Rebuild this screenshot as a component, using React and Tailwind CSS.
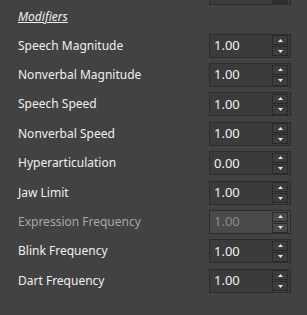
import React from 'react';

const rows = [
    { label: 'Speech Magnitude', value: '1.00' },
    { label: 'Nonverbal Magnitude', value: '1.00' },
    { label: 'Speech Speed', value: '1.00' },
    { label: 'Nonverbal Speed', value: '1.00' },
    { label: 'Hyperarticulation', value: '0.00' },
    { label: 'Jaw Limit', value: '1.00' },
    { label: 'Expression Frequency', value: '1.00', disabled: true },
    { label: 'Blink Frequency', value: '1.00' },
    { label: 'Dart Frequency', value: '1.00' },
];

const Arrow = ({ up }) => (
    <svg width="5" height="3" viewBox="0 0 5 3" className="block">
        {up ? <path d="M2.5 0 L5 3 L0 3 Z" fill="#e8e8e8" /> : <path d="M0 0 L5 0 L2.5 3 Z" fill="#e8e8e8" />}
    </svg>
);

const Spinner = ({ value, disabled }) => (
    <div
        className={`flex items-center w-[82px] h-[24px] border border-[#2c2c2c] ${disabled ? 'bg-[#4a4a4a]' : 'bg-[#3b3b3b]'}`}
    >
        <span className={`flex-1 pl-[4px] text-[13px] ${disabled ? 'text-[#8a8a8a]' : 'text-[#f2f2f2]'}`}>{value}</span>
        <div className="flex flex-col gap-[1px] mr-[2px]">
            <div className={`w-[16px] h-[10px] flex items-center justify-center border border-[#2a2a2a] ${disabled ? 'bg-[#4a4a4a]' : 'bg-[#3d3d3d]'}`}>
                <Arrow up />
            </div>
            <div className={`w-[16px] h-[10px] flex items-center justify-center border border-[#2a2a2a] ${disabled ? 'bg-[#4a4a4a]' : 'bg-[#3d3d3d]'}`}>
                <Arrow />
            </div>
        </div>
    </div>
);

export default function App() {
    return (
        <div className="w-[307px] h-[315px] bg-[#424242] overflow-hidden" style={{ fontFamily: '"Noto Sans", "Open Sans", sans-serif' }}>
            {/* tail of previous field */}
            <div className="pl-[209px] h-[5px]">
                <div className="w-[82px] h-[5px] bg-[#3b3b3b] border-b border-x border-[#2c2c2c] flex justify-end">
                    <div className="w-[16px] h-[4px] mr-[2px] bg-[#2e2e2e]" />
                </div>
            </div>

            <div className="pl-[18px] pt-[3px] h-[26px] text-[12px] italic underline text-[#f0f0f0]">Modifiers</div>

            <div className="flex flex-col">
                {rows.map((r) => (
                    <div key={r.label} className="flex items-center h-[29.4px] pl-[18px]">
                        <span className={`w-[191px] text-[12px] ${r.disabled ? 'text-[#a8a8a8]' : 'text-[#f0f0f0]'}`}>{r.label}</span>
                        <Spinner value={r.value} disabled={r.disabled} />
                    </div>
                ))}
            </div>
        </div>
    );
}
